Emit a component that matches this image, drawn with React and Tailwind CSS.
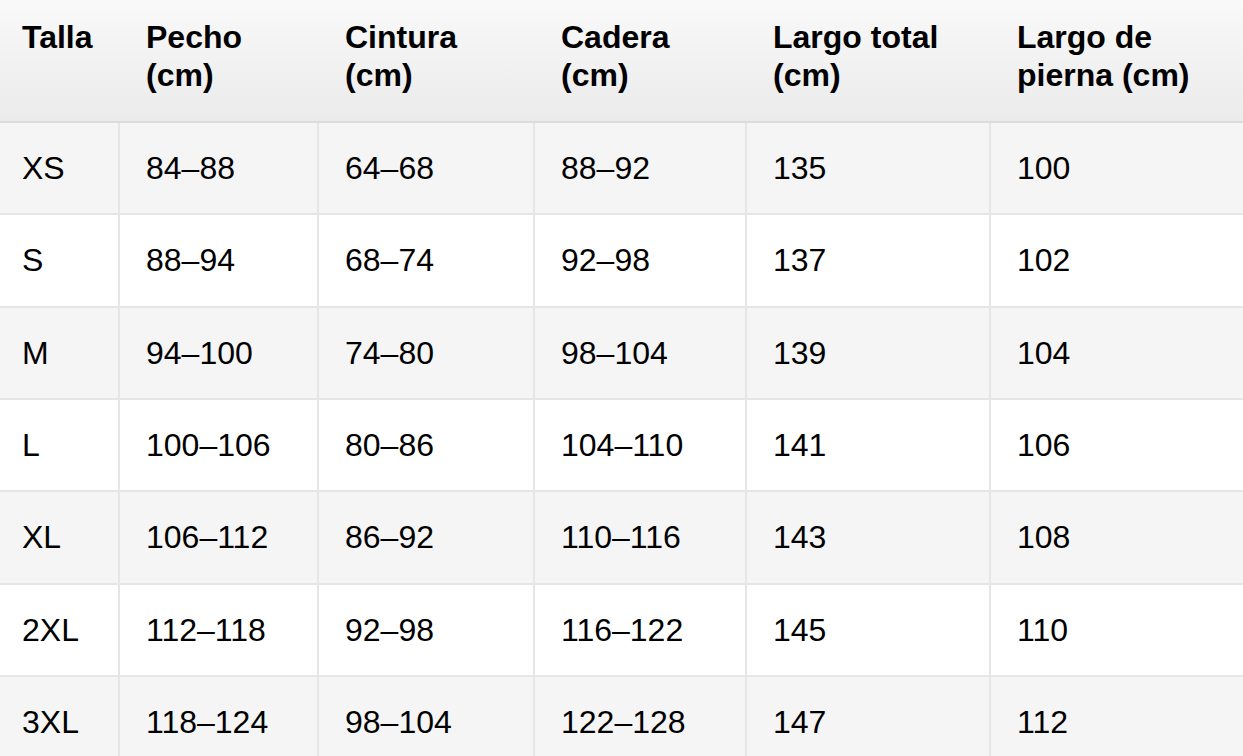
import React from "react";

const headers = [
  ["Talla"],
  ["Pecho", "(cm)"],
  ["Cintura", "(cm)"],
  ["Cadera", "(cm)"],
  ["Largo total", "(cm)"],
  ["Largo de", "pierna (cm)"],
];

const rows = [
  ["XS", "84–88", "64–68", "88–92", "135", "100"],
  ["S", "88–94", "68–74", "92–98", "137", "102"],
  ["M", "94–100", "74–80", "98–104", "139", "104"],
  ["L", "100–106", "80–86", "104–110", "141", "106"],
  ["XL", "106–112", "86–92", "110–116", "143", "108"],
  ["2XL", "112–118", "92–98", "116–122", "145", "110"],
  ["3XL", "118–124", "98–104", "122–128", "147", "112"],
];

const grid = "grid grid-cols-[118px_199px_216px_212px_244px_1fr]";

export default function App() {
  return (
    <div
      className="w-full min-h-screen bg-white text-black overflow-hidden"
      style={{ fontFamily: '"Liberation Sans", Arial, sans-serif' }}
    >
      <div className={`${grid} h-[123px] border-b-2 border-[#dcdcdc] bg-gradient-to-b from-[#f9f9f9] to-[#ebebeb]`}>
        {headers.map((h, i) => (
          <div
            key={i}
            className={`pt-[18px] text-[32px] leading-[38px] font-bold ${i === 0 ? "pl-[22px]" : "pl-[28px]"}`}
          >
            {h.map((l, j) => (
              <div key={j}>{l}</div>
            ))}
          </div>
        ))}
      </div>
      {rows.map((r, ri) => (
        <div
          key={ri}
          className={`${grid} h-[92.33px] border-b-2 border-[#e6e6e6] ${ri % 2 === 0 ? "bg-[#f5f5f5]" : "bg-white"}`}
        >
          {r.map((c, ci) => (
            <div
              key={ci}
              className={`flex items-center text-[32px] leading-[36px] ${ci === 0 ? "pl-[22px]" : "pl-[26px] border-l-2 border-[#e6e6e6]"}`}
            >
              {c}
            </div>
          ))}
        </div>
      ))}
    </div>
  );
}
